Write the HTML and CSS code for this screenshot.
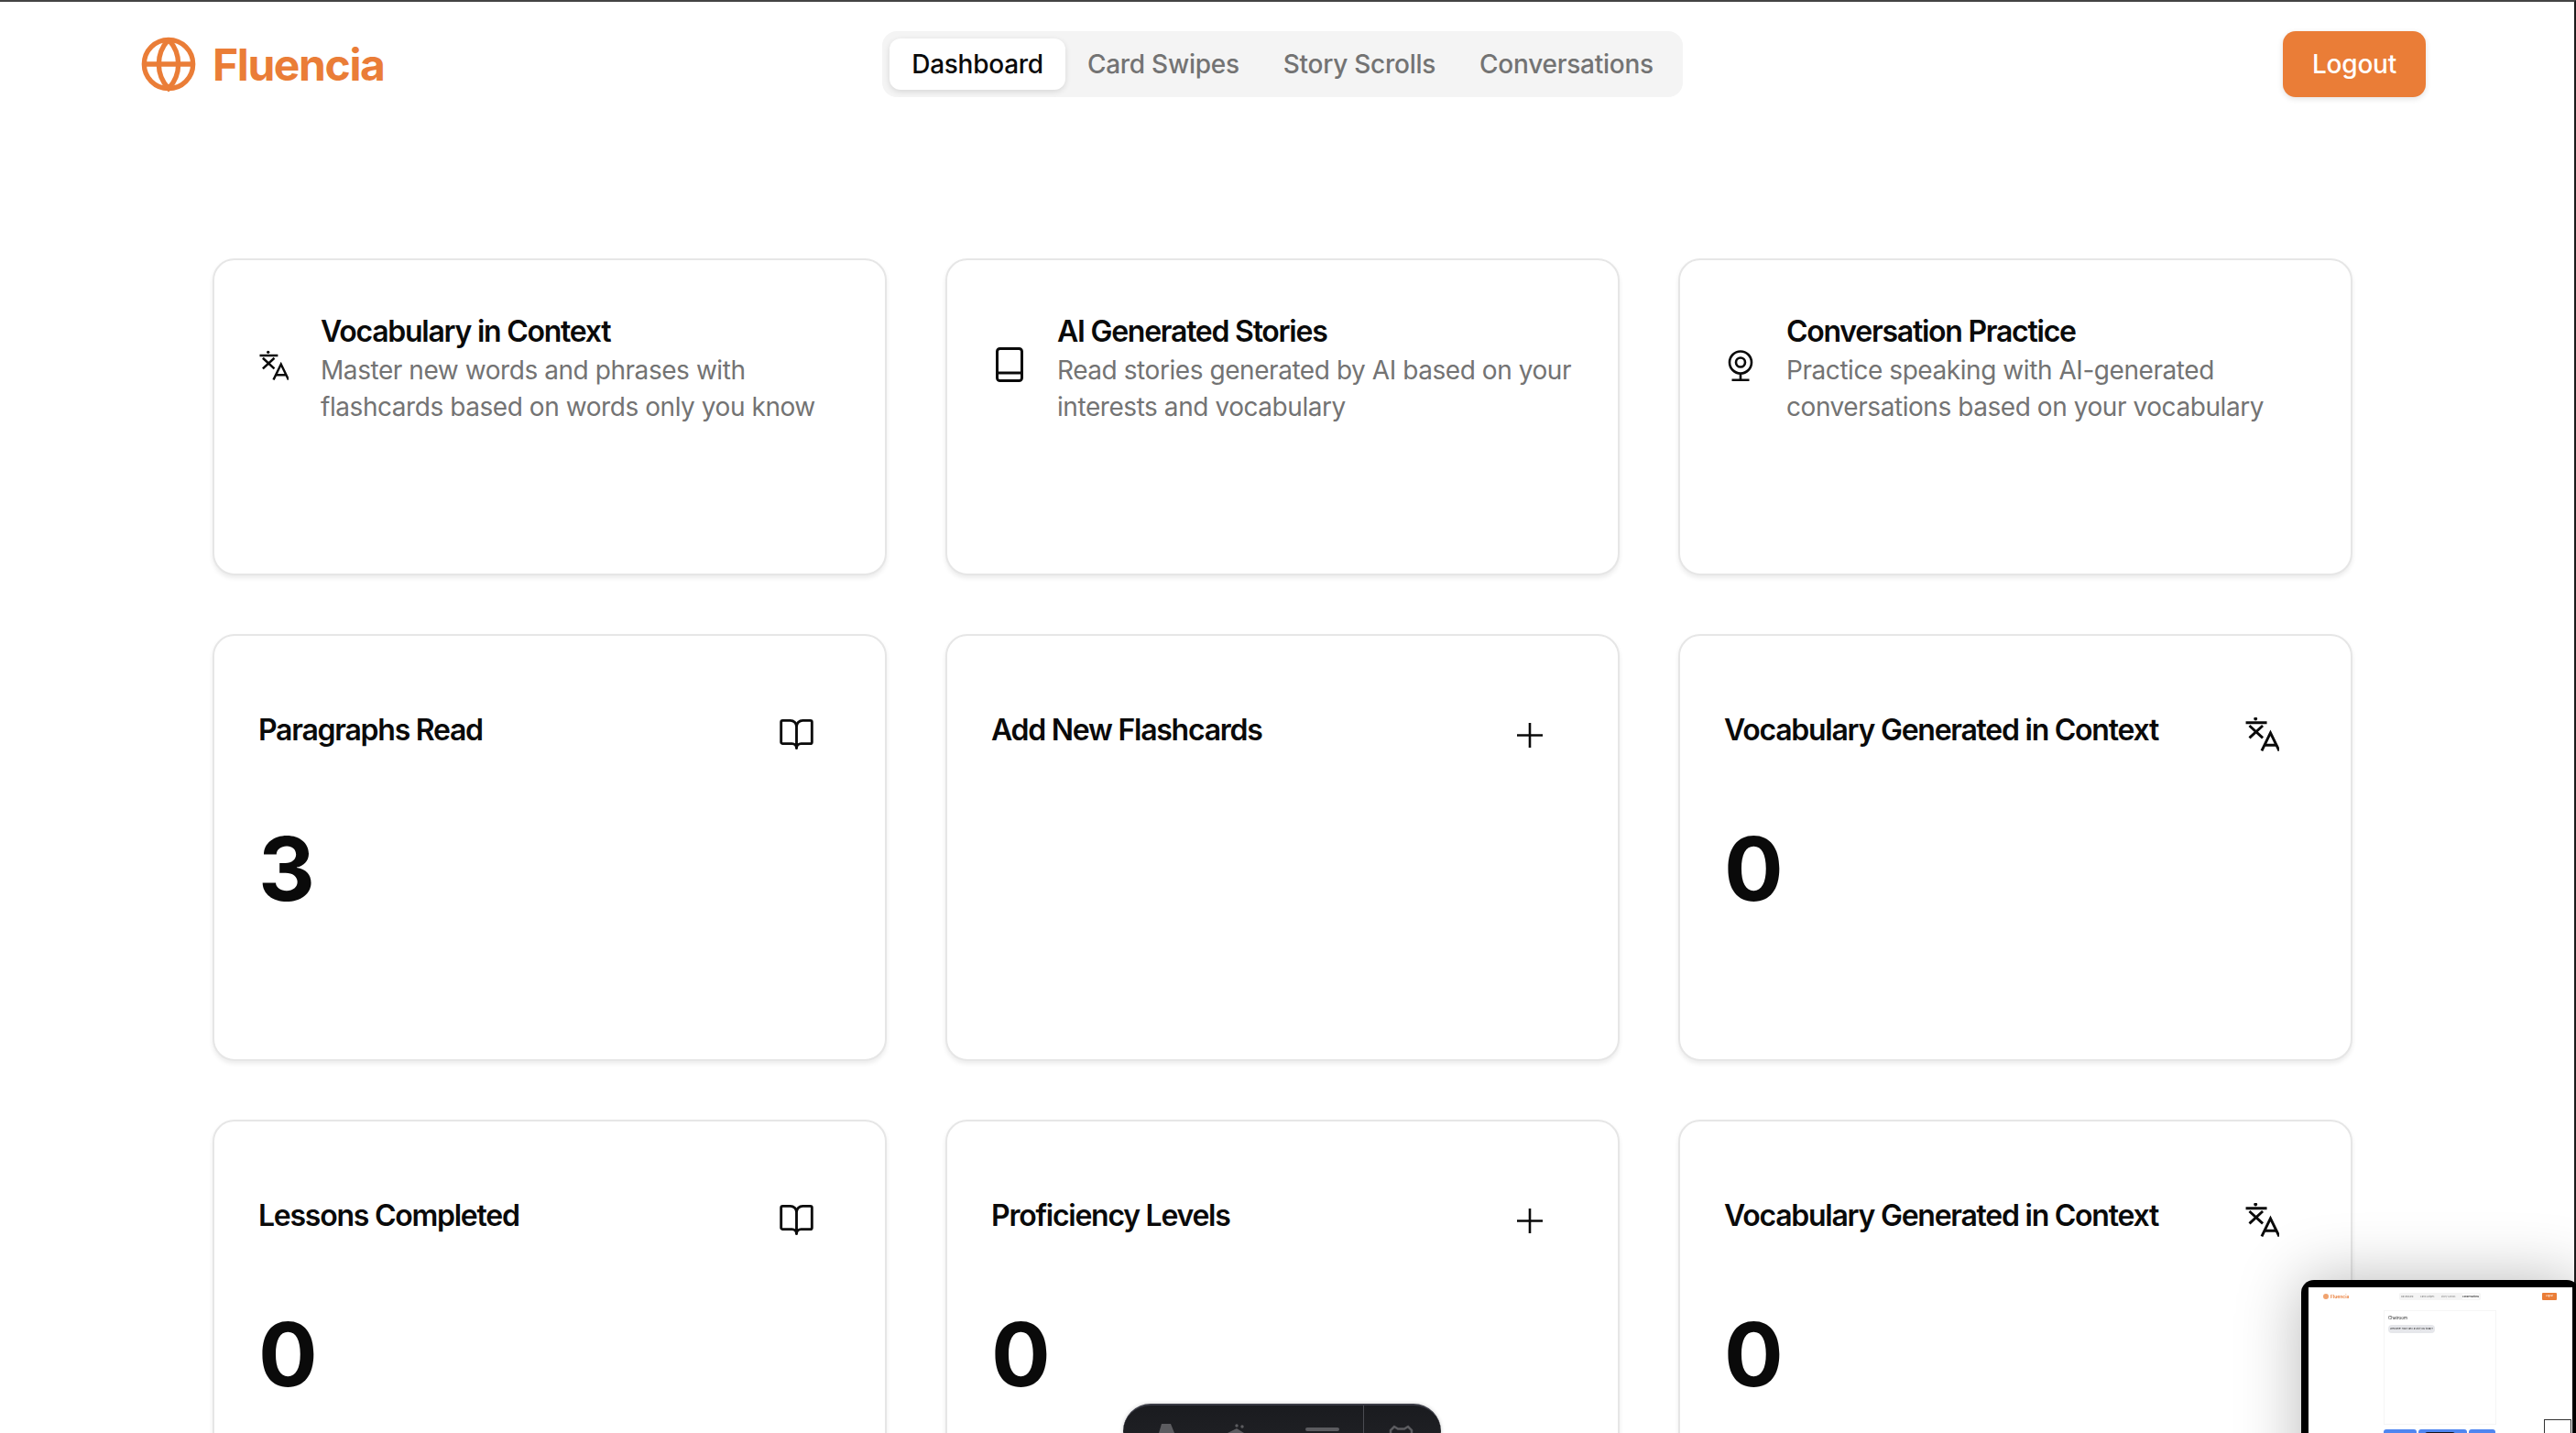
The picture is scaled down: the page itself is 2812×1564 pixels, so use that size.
FILE: index.html
```html
<!DOCTYPE html>
<html lang="en">
<head>
<meta charset="utf-8">
<title>Fluencia</title>
<link rel="stylesheet" href="styles.css">
</head>
<body>
<svg class="sprites" width="0" height="0" aria-hidden="true">
  <symbol id="i-translate" viewBox="0 0 33 33">
    <circle cx="10" cy="1.4" r="1.7" fill="currentColor" stroke="none"/>
    <path d="M.5 5.200H21M4 8l13 12M17 8 4 20M16 32.500 24.500 15 33 32.500M19 27h11" fill="none" stroke="currentColor" stroke-width="2.600"/>
  </symbol>
  <symbol id="i-book-open" viewBox="1 1.5 22 21">
    <path d="M12 7v14M3 18a1 1 0 0 1-1-1V4a1 1 0 0 1 1-1h5a4 4 0 0 1 4 4 4 4 0 0 1 4-4h5a1 1 0 0 1 1 1v13a1 1 0 0 1-1 1h-6a3 3 0 0 0-3 3 3 3 0 0 0-3-3z" fill="none" stroke="currentColor" stroke-width="1.7" stroke-linejoin="round"/>
  </symbol>
  <symbol id="i-plus" viewBox="0 0 37 37">
    <path d="M5 19.500h28M19 6v27" fill="none" stroke="currentColor" stroke-width="2.600"/>
  </symbol>
</svg>

<header class="topbar">
  <a class="brand">
    <svg class="brand-icon" viewBox="0 0 24 24" fill="none" stroke="currentColor" stroke-width="2"><circle cx="12" cy="12" r="10"/><path d="M12 2a14.5 14.5 0 0 0 0 20 14.5 14.5 0 0 0 0-20M2 12h20"/></svg>
    <span class="brand-name">Fluencia</span>
  </a>
  <nav class="tabs">
    <a class="tab tab-active">Dashboard</a>
    <a class="tab">Card Swipes</a>
    <a class="tab">Story Scrolls</a>
    <a class="tab">Conversations</a>
  </nav>
  <button class="logout">Logout</button>
</header>

<main class="grid">
  <section class="card feature">
    <svg class="feature-icon"><use href="#i-translate"/></svg>
    <div>
      <h3 class="title feature-title">Vocabulary in Context</h3>
      <p class="desc">Master new words and phrases with<br>flashcards based on words only you know</p>
    </div>
  </section>
  <section class="card feature">
    <svg class="feature-icon feature-icon-wide" viewBox="-4 0 36 38" fill="none" stroke="currentColor" stroke-width="3"><rect x="1.5" y="1.5" width="27" height="35" rx="3"/><path d="M1.5 28h27"/></svg>
    <div>
      <h3 class="title feature-title">AI Generated Stories</h3>
      <p class="desc">Read stories generated by AI based on your<br>interests and vocabulary</p>
    </div>
  </section>
  <section class="card feature">
    <svg class="feature-icon" viewBox="-1.5 0 32 34" fill="none" stroke="currentColor" stroke-width="2.6"><circle cx="15.5" cy="13.5" r="12"/><circle cx="15.5" cy="13.5" r="5"/><path d="M15.5 26v7M6 32.7h19"/></svg>
    <div>
      <h3 class="title feature-title">Conversation Practice</h3>
      <p class="desc">Practice speaking with AI-generated<br>conversations based on your vocabulary</p>
    </div>
  </section>

  <section class="card stat">
    <div class="stat-head"><h3 class="title">Paragraphs Read</h3><svg class="stat-icon"><use href="#i-book-open"/></svg></div>
    <div class="value">3</div>
  </section>
  <section class="card stat">
    <div class="stat-head"><h3 class="title">Add New Flashcards</h3><svg class="stat-icon"><use href="#i-plus"/></svg></div>
  </section>
  <section class="card stat">
    <div class="stat-head"><h3 class="title">Vocabulary Generated in Context</h3><svg class="stat-icon"><use href="#i-translate"/></svg></div>
    <div class="value">0</div>
  </section>

  <section class="card stat">
    <div class="stat-head"><h3 class="title">Lessons Completed</h3><svg class="stat-icon"><use href="#i-book-open"/></svg></div>
    <div class="value">0</div>
  </section>
  <section class="card stat">
    <div class="stat-head"><h3 class="title">Proficiency Levels</h3><svg class="stat-icon"><use href="#i-plus"/></svg></div>
    <div class="value">0</div>
  </section>
  <section class="card stat">
    <div class="stat-head"><h3 class="title">Vocabulary Generated in Context</h3><svg class="stat-icon"><use href="#i-translate"/></svg></div>
    <div class="value">0</div>
  </section>
</main>

<div class="dock" aria-hidden="true">
  <svg class="dock-icons" viewBox="0 0 347 32" fill="#5c5c60">
    <path d="M39 32 42 22h10l4 10z"/>
    <path d="M114 32 124 27l8 5z"/>
    <circle cx="124" cy="24" r="1.7"/><circle cx="130" cy="25" r="1.7"/>
    <rect x="199" y="26" width="37" height="4" rx="2"/>
    <path d="M292 32v-3l4-4 4 2.500h7l4-2.500 4 4v3" fill="none" stroke="#5c5c60" stroke-width="2.500"/>
  </svg>
  <span class="dock-divider"></span>
</div>

<aside class="preview">
  <div class="mini-page">
    <div class="mini-top">
      <span class="mini-brand"><i class="mini-globe"></i>Fluencia</span>
      <span class="mini-tabs"><span>Dashboard</span><span>Card Swipes</span><span>Story Scrolls</span><b>Conversations</b></span>
      <span class="mini-logout">Logout</span>
    </div>
    <div class="mini-card">
      <div class="mini-title">Chatroom</div>
      <div class="mini-bubble">Welcome! How can I assist you today?</div>
    </div>
    <div class="mini-actions"><i class="mini-blue mini-b1"></i><i class="mini-blue mini-b2"></i><i class="mini-blue mini-b3"></i></div>
    <i class="mini-dock"></i>
    <i class="mini-nested"></i>
  </div>
</aside>
</body>
</html>
```
FILE: styles.css
```css
* { box-sizing: border-box; }
html, body { margin: 0; }
body {
  width: 2812px;
  height: 1564px;
  overflow: hidden;
  background: #fff;
  color: #0a0a0a;
  font-family: Inter, "Liberation Sans", sans-serif;
  border-top: 2px solid #444;
  border-right: 2px solid #1c1c1c;
}
.sprites { position: absolute; }

.topbar {
  display: grid;
  grid-template-columns: 1fr auto 1fr;
  align-items: center;
  padding: 32px 162px 0 152px;
}
.brand { display: flex; align-items: center; gap: 16px; color: #ea7d37; }
.brand-icon { width: 64px; height: 64px; }
.brand-name { padding-top: 2px; font-size: 48px; line-height: 64px; font-weight: 700; letter-spacing: -1.4px; }
.tabs {
  display: flex;
  padding: 8px;
  height: 72px;
  background: #f4f4f4;
  border-radius: 16px;
}
.tab {
  padding: 0 24px;
  border-radius: 12px;
  font-size: 28px;
  line-height: 56px;
  font-weight: 500;
  letter-spacing: -.26px;
  color: #737373;
  white-space: nowrap;
}
.tab-active { background: #fff; color: #0a0a0a; box-shadow: 0 2px 6px rgba(0,0,0,.12); }
.logout {
  justify-self: end;
  width: 156px;
  height: 72px;
  border: 0;
  border-radius: 14px;
  background: #ea7d37;
  color: #fff;
  font: 500 28px Inter, sans-serif;
  letter-spacing: -.2px;
  box-shadow: 0 2px 6px rgba(0,0,0,.12);
}

.grid {
  display: grid;
  grid-template-columns: repeat(3, 736px);
  grid-template-rows: 346px 466px 466px;
  gap: 64px;
  padding: 176px 0 0 232px;
}
.card {
  background: #fff;
  border: 2px solid #e6e6e6;
  border-radius: 24px;
  box-shadow: 0 3px 5px rgba(0,0,0,.08);
}
.title { margin: 0; font-size: 32px; line-height: 48px; font-weight: 600; letter-spacing: -1.25px; white-space: nowrap; }
.feature-title { margin: 2px 0 -2px; }
.desc { margin: 0; font-size: 28px; line-height: 40px; letter-spacing: -.44px; color: #737373; white-space: nowrap; }

.feature { display: flex; align-items: flex-start; gap: 35px; padding: 52px 48px 0 49px; }
.feature-icon { flex: none; width: 32px; height: 34px; margin-top: 46px; overflow: visible; }
.feature-icon-wide { width: 36px; height: 38px; margin-top: 43px; }

.stat { padding: 79px 78px 0 48px; }
.stat-head { display: flex; justify-content: space-between; align-items: flex-start; }
.stat-icon { flex: none; width: 37px; height: 37px; margin-top: 10px; }
.value { margin-top: 79px; font-size: 96px; line-height: 96px; font-weight: 700; }

.dock {
  position: fixed;
  left: 1226px;
  top: 1532px;
  width: 347px;
  height: 60px;
  background: linear-gradient(#1a1b1f, #222327);
  border-top: 2px solid #3a3b45;
  border-radius: 36px;
  box-shadow: 0 0 4px rgba(0,0,0,.2);
}
.dock-icons { display: block; width: 347px; height: 32px; margin-top: -2px; }
.dock-divider { position: absolute; left: 262px; top: 0; width: 1px; height: 60px; background: #4a4b52; }

.preview {
  position: fixed;
  left: 2512px;
  top: 1397px;
  width: 304px;
  height: 260px;
  background: #000;
  border-radius: 14px;
  padding: 8px;
  box-shadow: 0 0 70px rgba(0,0,0,.28);
}
.mini-page {
  position: relative;
  height: 100%;
  background: #fff;
  filter: blur(.4px);
  overflow: hidden;
}
.mini-top { display: flex; align-items: center; padding: 4px 17px 0 16px; height: 12px; box-sizing: content-box; }
.mini-brand { display: flex; flex: none; align-items: center; gap: 2px; font-size: 5px; font-weight: 600; color: #ea7d37; width: 83px; }
.mini-globe { width: 6px; height: 6px; border-radius: 50%; background: #f0a36f; }
.mini-tabs { display: flex; flex: none; justify-content: space-between; width: 89px; padding: 1px 2px; border-radius: 2px; background: #f4f4f4; font-size: 2.6px; line-height: 6px; color: #777; white-space: nowrap; }
.mini-tabs b { background: #fff; color: #222; font-weight: 600; }
.mini-logout { flex: none; margin-left: auto; width: 16px; height: 8px; background: #ea7d37; color: #fff; font-size: 2.400px; line-height: 8px; text-align: center; border-radius: 1px; }
.mini-card { width: 123px; height: 125px; margin: 9px 0 0 82px; padding: 4px; border: 1px solid #f5f5f5; }
.mini-title { font-size: 4.500px; line-height: 7px; color: #222; }
.mini-bubble { width: fit-content; margin-top: 4px; padding: 0 2px; font-size: 2.600px; line-height: 9px; border-radius: 4px; background: #e6e7eb; color: #222; white-space: nowrap; }
.mini-actions { display: flex; gap: 2px; margin: 5px 0 0 82px; }
.mini-blue { display: block; height: 14px; border-radius: 3px 3px 0 0; background: #4f86f0; }
.mini-b1 { width: 36px; }
.mini-b2 { width: 53px; }
.mini-b3 { width: 29px; }
.mini-dock { position: absolute; left: 127px; top: 158px; width: 33px; height: 6px; border-radius: 3px 3px 0 0; background: #14151a; }
.mini-nested { position: absolute; left: 257px; top: 144px; width: 30px; height: 20px; border: 1px solid #333; border-bottom: 0; background: #fff; }
```
